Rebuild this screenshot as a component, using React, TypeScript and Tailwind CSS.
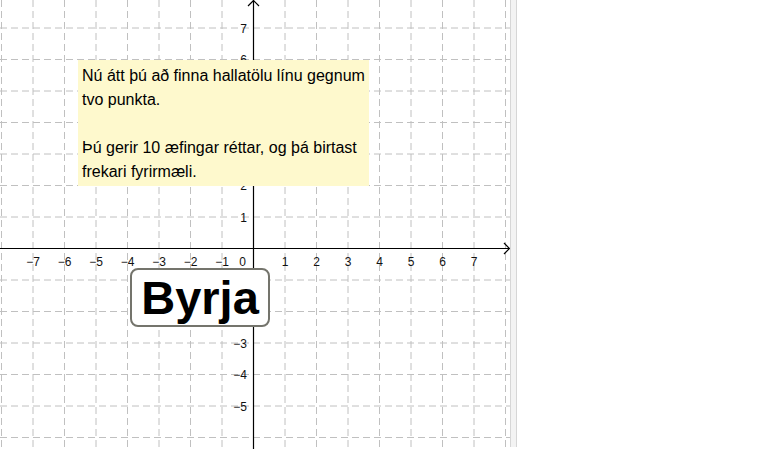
import React from 'react';

const ORIGIN_X = 253.5;
const ORIGIN_Y = 248.5;
const UNIT = 31.5;
const VIEW_W = 510;
const VIEW_H = 449;

const xs = Array.from({ length: 17 }, (_, i) => i - 8);
const ys = Array.from({ length: 16 }, (_, i) => i - 8);

// y labels 3, 4, 5, -1, -2 sit fully under the note and the button, so they are left out
const yLabels = [7, 6, 2, 1, -3, -4, -5];
const xLabels = [-7, -6, -5, -4, -3, -2, -1, 1, 2, 3, 4, 5, 6, 7];

const fmt = (k: number) => (k < 0 ? '\u2212' + -k : String(k));

function Graph() {
  return (
    <svg width={VIEW_W} height={VIEW_H} className="block" style={{ fontFamily: '"Liberation Sans", Arial, sans-serif' }}>
      {/* grid */}
      <g stroke="#c0c0c0" strokeWidth={1} strokeDasharray="7 4">
        {xs.map((k) => (
          <line key={'gx' + k} x1={ORIGIN_X + k * UNIT} y1={0} x2={ORIGIN_X + k * UNIT} y2={VIEW_H} />
        ))}
        {ys.map((k) => (
          <line key={'gy' + k} x1={0} y1={ORIGIN_Y + k * UNIT} x2={VIEW_W} y2={ORIGIN_Y + k * UNIT} />
        ))}
      </g>

      {/* axes */}
      <g stroke="#000" strokeWidth={1.2} fill="none">
        <line x1={0} y1={ORIGIN_Y} x2={VIEW_W - 1} y2={ORIGIN_Y} />
        <line x1={ORIGIN_X} y1={0.5} x2={ORIGIN_X} y2={VIEW_H} />
        <polyline points={`${VIEW_W - 6},${ORIGIN_Y - 5.5} ${VIEW_W - 0.5},${ORIGIN_Y} ${VIEW_W - 6},${ORIGIN_Y + 5.5}`} />
        <polyline points={`${ORIGIN_X - 5.5},6 ${ORIGIN_X},0.5 ${ORIGIN_X + 5.5},6`} />
      </g>

      {/* x labels */}
      <g fontSize={12} fill="#111" textAnchor="middle">
        {xLabels.map((k) => (
          <text key={'lx' + k} x={ORIGIN_X + k * UNIT} y={ORIGIN_Y + 17.5}>
            {fmt(k)}
          </text>
        ))}
        <text x={ORIGIN_X - 11} y={ORIGIN_Y + 17.5}>0</text>
      </g>

      {/* y labels */}
      <g fontSize={12} fill="#111" textAnchor="end">
        {yLabels.map((k) => (
          <text key={'ly' + k} x={ORIGIN_X - 6.5} y={ORIGIN_Y - k * UNIT + 4.5}>
            {fmt(k)}
          </text>
        ))}
      </g>
    </svg>
  );
}

export default function App() {
  return (
    <div className="flex h-[449px] w-[762px] overflow-hidden bg-white font-['Liberation_Sans',Arial,sans-serif]">
      <div className="relative h-[449px] w-[510px] shrink-0">
        <Graph />

        {/* instructions */}
        <div className="absolute left-[78px] top-[60px] h-[126px] w-[291px] bg-[#fef9cd] pl-[4px] pt-[4px] text-[16px] leading-[24px] text-black">
          <p>Nú átt þú að finna hallatölu línu gegnum</p>
          <p>tvo punkta.</p>
          <p className="mt-[24px]">Þú gerir 10 æfingar réttar, og þá birtast</p>
          <p>frekari fyrirmæli.</p>
        </div>

        {/* start button */}
        <button className="absolute left-[130px] top-[268px] flex h-[59px] w-[140px] items-center justify-center rounded-[8px] border-2 border-[#74746c] bg-white text-[47px] font-bold leading-none text-black">
          Byrja
        </button>
      </div>

      <div className="h-[447px] w-[7px] shrink-0 border-x border-x-[#d6d6d6] bg-[#f3f3f3]" />
      <div className="flex-1" />
    </div>
  );
}
